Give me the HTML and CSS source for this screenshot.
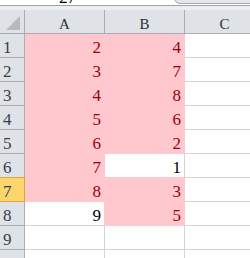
FILE: index.html
```html
<!DOCTYPE html>
<html>
<head>
<meta charset="utf-8">
<link rel="stylesheet" href="styles.css">
</head>
<body>
<div class="sheet">
  <div class="topbar">
    <div class="fx-text">27</div>
    <div class="fx-expand"></div>
  </div>
  <div class="topline"></div>
  <div class="topgap"></div>
  <div class="grid">
    <div class="corner"><div class="tri"></div></div>
    <div class="colh">A</div>
    <div class="colh">B</div>
    <div class="colh">C</div>

    <div class="rowh">1</div><div class="c pk">2</div><div class="c pk">4</div><div class="c"></div>
    <div class="rowh">2</div><div class="c pk">3</div><div class="c pk">7</div><div class="c"></div>
    <div class="rowh">3</div><div class="c pk">4</div><div class="c pk">8</div><div class="c"></div>
    <div class="rowh">4</div><div class="c pk">5</div><div class="c pk">6</div><div class="c"></div>
    <div class="rowh">5</div><div class="c pk">6</div><div class="c pk">2</div><div class="c"></div>
    <div class="rowh">6</div><div class="c pk">7</div><div class="c wb">1</div><div class="c"></div>
    <div class="rowh sel">7</div><div class="c pk">8</div><div class="c pk">3</div><div class="c"></div>
    <div class="rowh">8</div><div class="c wr">9</div><div class="c pk">5</div><div class="c"></div>
    <div class="rowh">9</div><div class="c"></div><div class="c"></div><div class="c"></div>
    <div class="rowh"></div><div class="c"></div><div class="c"></div><div class="c"></div>
  </div>
</div>
</body>
</html>
```
FILE: styles.css
```css
html, body {
  margin: 0;
  padding: 0;
  background: #ffffff;
}
.sheet {
  width: 250px;
  height: 258px;
  overflow: hidden;
  font-family: "Liberation Serif", "Times New Roman", serif;
}
.topbar {
  height: 5px;
  display: flex;
  overflow: hidden;
  background: #ffffff;
}
.fx-text {
  margin-left: 59px;
  margin-top: -11px;
  font-size: 17px;
  line-height: 17px;
  color: #000;
}
.fx-expand {
  margin-left: auto;
  margin-right: -20px;
  width: 96px;
  height: 12px;
  margin-top: -8px;
  background: #e3e5e8;
  border: 1px solid #a6a9ae;
  border-radius: 8px;
  box-sizing: border-box;
}
.topline {
  height: 1px;
  background: #9fa3a8;
}
.topgap {
  height: 4px;
  background: #eceef1;
}
.grid {
  display: grid;
  grid-template-columns: 25px 80px 80px 80px;
  grid-auto-rows: 24px;
}
.grid > div {
  box-sizing: border-box;
  border-right: 1px solid #d4d4d4;
  border-bottom: 1px solid #d4d4d4;
}
.corner {
  background: #dfe2e6;
  border-color: #a9adb3 !important;
  position: relative;
}
.tri {
  position: absolute;
  right: 4px;
  bottom: 3px;
  width: 0;
  height: 0;
  border-left: 14px solid transparent;
  border-bottom: 14px solid #b6bac0;
}
.colh {
  background: #dfe2e6;
  border-color: #a9adb3 !important;
  text-align: center;
  font-size: 15px;
  line-height: 24px;
  padding-top: 2px;
  color: #28303c;
}
.rowh {
  background: #dfe2e6;
  border-color: #abafb5 !important;
  font-size: 17px;
  line-height: 23px;
  padding-left: 3px;
  padding-top: 2px;
  color: #34404f;
}
.rowh.sel {
  background: #fbd66d;
  border-color: #e3a33a !important;
  border-top: 1px solid #e3a33a !important;
  margin-top: -1px;
  height: 25px;
}
.c {
  text-align: right;
  font-size: 17px;
  line-height: 23px;
  padding-right: 3px;
  padding-top: 2px;
  color: #000;
  background: #ffffff;
}
.pk {
  background: #ffc7ce;
  border-color: #ffc7ce !important;
  color: #9c0006;
}
.wb {
  border-bottom-color: #ffc7ce !important;
}
.wr {
  border-right-color: #ffc7ce !important;
}
```
